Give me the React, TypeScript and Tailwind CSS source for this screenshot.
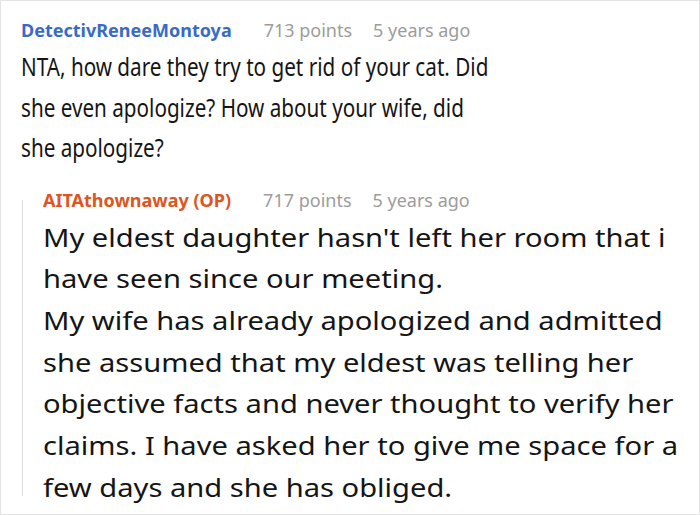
import React from 'react';

type MetaProps = {
  author: string;
  points: number;
  age: string;
  op?: boolean;
};

// header line of one comment: name, score, age
const CommentMeta = ({ author, points, age, op }: MetaProps) => (
  <div className="flex items-baseline whitespace-nowrap text-[18px] leading-[24px]">
    <span className={op ? 'font-bold text-[#df5520]' : 'font-bold text-[#3a6bc3]'}>
      {author}
    </span>
    <span className="ml-[32px] text-[#9c9c9c]">{points} points</span>
    <span className="ml-[21px] text-[#9c9c9c]">{age}</span>
  </div>
);

export default function App() {
  return (
    <div
      className="w-[700px] h-[515px] overflow-hidden border border-[#e3e3e3] bg-white text-[#151515]"
      style={{ fontFamily: '"Noto Sans", "Open Sans", sans-serif' }}
    >
      <div className="pl-[20px] pt-[17px]">
        <CommentMeta author="DetectivReneeMontoya" points={713} age="5 years ago" />

        {/* the parent comment is squeezed sideways in the source */}
        <div className="mt-[4px] origin-left scale-x-[0.795] whitespace-nowrap text-[26px] leading-[40.5px]">
          NTA, how dare they try to get rid of your cat. Did
          <br />
          she even apologize? How about your wife, did
          <br />
          she apologize?
        </div>
      </div>

      {/* reply */}
      <div className="ml-[21px] mt-[20px] flex">
        <div className="my-[12px] w-px shrink-0 bg-[#dedede]" />
        <div className="pl-[20px]">
          <CommentMeta author="AITAthownaway (OP)" points={717} age="5 years ago" op />
          <div className="mt-[5px] origin-left scale-x-[1.12] whitespace-nowrap text-[26px] leading-[41.7px]">
            <p>
              My eldest daughter hasn't left her room that i
              <br />
              have seen since our meeting.
            </p>
            <p>
              My wife has already apologized and admitted
              <br />
              she assumed that my eldest was telling her
              <br />
              objective facts and never thought to verify her
              <br />
              claims. I have asked her to give me space for a
              <br />
              few days and she has obliged.
            </p>
          </div>
        </div>
      </div>
    </div>
  );
}
